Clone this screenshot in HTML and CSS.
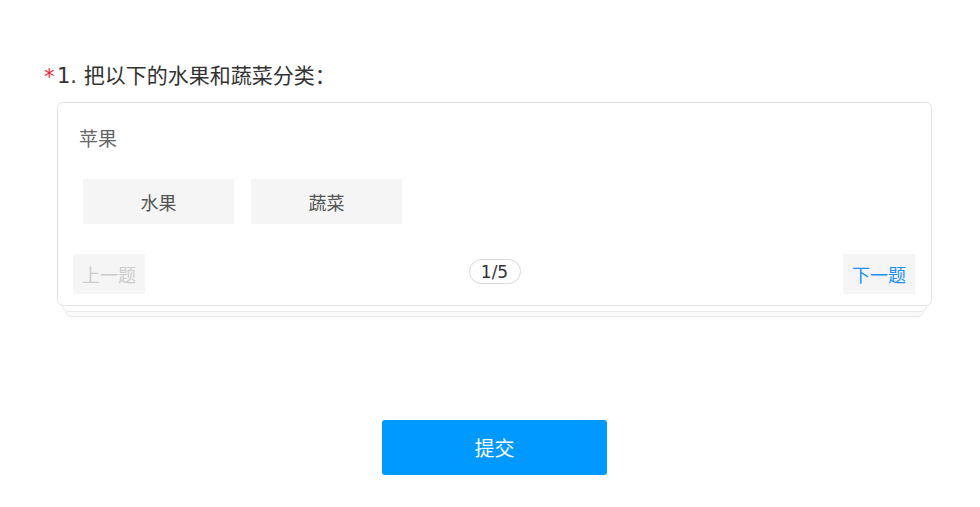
FILE: index.html
```html
<!DOCTYPE html>
<html lang="zh-CN">
<head>
<meta charset="utf-8">
<title>分类题</title>
<link rel="stylesheet" href="styles.css">
</head>
<body>
<div class="page">
  <div class="question">
    <div class="title"><span class="star">*</span>1. 把以下的水果和蔬菜分类：</div>
    <div class="stack">
      <div class="card">
        <div class="item">苹果</div>
        <div class="options">
          <div class="option">水果</div>
          <div class="option">蔬菜</div>
        </div>
        <div class="nav">
          <div class="nav-btn disabled">上一题</div>
          <div class="pager">1/5</div>
          <div class="nav-btn active">下一题</div>
        </div>
      </div>
    </div>
  </div>
  <div class="submit-row">
    <button class="submit">提交</button>
  </div>
</div>
</body>
</html>
```
FILE: styles.css
```css
* { box-sizing: border-box; }
html, body { margin: 0; background: #fff; }
body {
  font-family: "DejaVu Sans", "Noto Sans CJK SC", sans-serif;
  color: #333;
}
.page { width: 980px; }
.question { padding: 63px 48px 0 43px; }
.title {
  font-size: 21px;
  line-height: 26px;
  color: #333;
  display: flex;
  align-items: center;
  white-space: nowrap;
}
.star {
  color: #f5222d;
  font-size: 21px;
  width: 14px;
  padding-left: 1px;
  position: relative;
  top: 1px;
}
.stack {
  position: relative;
  margin: 13px 0 0 14px;
  padding-bottom: 11px;
}
.stack::before, .stack::after {
  content: "";
  position: absolute;
  top: 20px;
  border: 1px solid #e9e9e9;
  border-radius: 6px;
  background: #fff;
}
.stack::before { left: 5px; right: 5px; bottom: 5px; z-index: 1; }
.stack::after { left: 8px; right: 8px; bottom: 0; z-index: 0; background: #fafafa; }
.card {
  position: relative;
  z-index: 2;
  background: #fff;
  border: 1px solid #e3e3e3;
  border-radius: 6px;
  padding: 24px 16px 11px 15px;
}
.item {
  font-size: 19px;
  line-height: 24px;
  color: #666;
  padding-left: 6px;
}
.options {
  display: flex;
  gap: 17px;
  margin: 28px 0 0 10px;
}
.option {
  width: 151px;
  height: 45px;
  background: #f5f5f5;
  color: #555;
  font-size: 18px;
  display: flex;
  align-items: center;
  justify-content: center;
}
.nav {
  display: flex;
  align-items: center;
  justify-content: space-between;
  margin-top: 30px;
}
.nav-btn {
  width: 72px;
  height: 40px;
  background: #f5f5f5;
  font-size: 18px;
  display: flex;
  align-items: center;
  justify-content: center;
}
.nav-btn.disabled { color: #ccc; }
.nav-btn.active { color: #1890ff; }
.pager {
  width: 52px;
  height: 25px;
  border: 1px solid #d9d9d9;
  border-radius: 13px;
  font-size: 17px;
  color: #333;
  display: flex;
  align-items: center;
  justify-content: center;
  margin-top: -5px;
  margin-left: 1px;
}
.submit-row {
  display: flex;
  justify-content: center;
  padding: 103px 48px 0 57px;
}
.submit {
  width: 225px;
  height: 55px;
  border: none;
  border-radius: 3px;
  background: #0099ff;
  color: #fff;
  font-family: "DejaVu Sans", "Noto Sans CJK SC", sans-serif;
  font-size: 20px;
  cursor: pointer;
}
```
